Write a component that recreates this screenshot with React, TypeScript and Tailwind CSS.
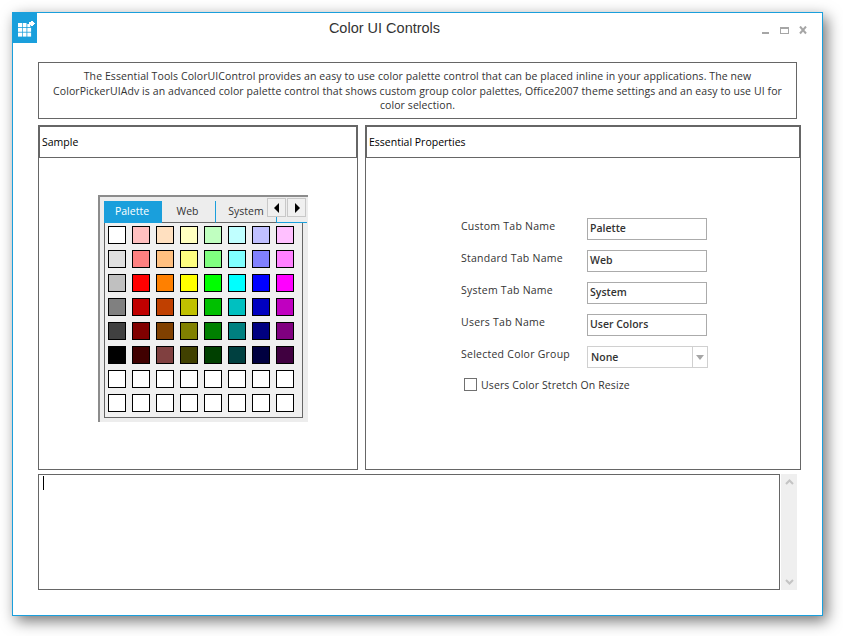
const rows = [
  ["#ffffff", "#ffc0c0", "#ffe0c0", "#ffffc0", "#c0ffc0", "#c0ffff", "#c0c0ff", "#ffc0ff"],
  ["#e0e0e0", "#ff8080", "#ffc080", "#ffff80", "#80ff80", "#80ffff", "#8080ff", "#ff80ff"],
  ["#c0c0c0", "#ff0000", "#ff8000", "#ffff00", "#00ff00", "#00ffff", "#0000ff", "#ff00ff"],
  ["#808080", "#c00000", "#c04000", "#c0c000", "#00c000", "#00c0c0", "#0000c0", "#c000c0"],
  ["#404040", "#800000", "#804000", "#808000", "#008000", "#008080", "#000080", "#800080"],
  ["#000000", "#400000", "#804040", "#404000", "#004000", "#004040", "#000040", "#400040"],
  ["#ffffff", "#ffffff", "#ffffff", "#ffffff", "#ffffff", "#ffffff", "#ffffff", "#ffffff"],
  ["#ffffff", "#ffffff", "#ffffff", "#ffffff", "#ffffff", "#ffffff", "#ffffff", "#ffffff"],
];

const fields = [
  ["Custom Tab Name", "Palette"],
  ["Standard Tab Name", "Web"],
  ["System Tab Name", "System"],
  ["Users Tab Name", "User Colors"],
];

function AppIcon() {
  return (
    <svg width="24" height="30" viewBox="0 0 24 30" className="block">
      <rect width="24" height="30" fill="#1a9fdc" />
      <g fill="#ffffff">
        <rect x="5" y="10" width="4" height="4" />
        <rect x="9.7" y="10" width="3.8" height="4" />
        <rect x="14.3" y="11" width="3" height="3" />
        <rect x="5" y="14.8" width="4" height="4" />
        <rect x="9.7" y="14.8" width="3.8" height="4" />
        <rect x="14.3" y="14.8" width="3.8" height="4" />
        <rect x="5" y="19.6" width="4" height="4" />
        <rect x="9.7" y="19.6" width="3.8" height="4" />
        <rect x="14.3" y="19.6" width="3.8" height="4" />
        <path d="M15 11 h1 v-2 h2 v-1 h2 v1 h1 v1 h1 v1 h-1 v1 h-1 v1 h-2 v-1 h-2 v-1 z" />
      </g>
    </svg>
  );
}

function WindowButtons() {
  return (
    <div className="flex items-start gap-[10px] mt-[13px] mr-[15px] h-[10px]">
      <svg width="8" height="9" viewBox="0 0 8 9"><rect x="0" y="6" width="7" height="2" fill="#a6a6a6" /></svg>
      <svg width="9" height="9" viewBox="0 0 9 9"><rect x="0.5" y="1.5" width="8" height="6" fill="none" stroke="#a6a6a6" /><rect x="0" y="1" width="9" height="2" fill="#a6a6a6" /></svg>
      <svg width="8" height="9" viewBox="0 0 8 9"><path d="M1 0.5 L7 7.5 M7 0.5 L1 7.5" stroke="#a6a6a6" strokeWidth="2" /></svg>
    </div>
  );
}

function ColorPicker() {
  return (
    <div className="w-[210px] h-[227px] ml-[59px] mt-[38px] border-l-2 border-t-2 border-[#8c8c8c] bg-[#ededed] pt-1 pl-[4px] pr-[5px] pb-[5px]">
      <div className="relative flex h-[22px] w-[203px]">
        <div className="w-[58px] bg-[#1a9fdc] text-white flex items-center justify-center border-b border-[#1a9fdc] pr-[2px] pb-[2px]">Palette</div>
        <div className="w-[54px] flex items-center justify-center border-r border-r-[#1a9fdc] border-b border-b-[#666666] pr-[2px] pb-[2px]">Web</div>
        <div className="w-[61px] flex items-center justify-center border-r border-r-[#1a9fdc] border-b border-b-[#666666] pb-[2px]">System</div>
        <div className="flex-1 border-b border-[#1a9fdc]" />
        <div className="absolute left-[163px] -top-[3px] flex gap-px">
          <div className="w-[19px] h-[19px] bg-[#f0f0f0] border border-[#c8c8c8] flex items-center justify-center">
            <svg width="6" height="10" viewBox="0 0 6 10"><path d="M5 0 V10 L0 5 Z" fill="#000" /></svg>
          </div>
          <div className="w-[19px] h-[19px] bg-[#f0f0f0] border border-[#c8c8c8] flex items-center justify-center">
            <svg width="6" height="10" viewBox="0 0 6 10"><path d="M1 0 V10 L6 5 Z" fill="#000" /></svg>
          </div>
        </div>
      </div>
      <div className="w-[199px] h-[195px] border border-t-0 border-[#666666] bg-[#f0f0f0] pl-[3px] pt-[3px] flex flex-col gap-[6px]">
        {rows.map((r, i) => (
          <div key={i} className="flex gap-[6px]">
            {r.map((c, j) => (
              <div key={j} className="w-[18px] h-[18px] border border-black" style={{ backgroundColor: c }} />
            ))}
          </div>
        ))}
      </div>
    </div>
  );
}

function FormRow({ label, value }: { label: string; value: string }) {
  return (
    <div className="flex h-[22px] mb-[10px]">
      <div className="w-[126px] mt-[1px] tracking-[0.25px]">{label}</div>
      <div className="w-[120px] h-[22px] border border-[#ababab] pl-[2px] pb-[2px] flex items-center font-semibold text-[10.5px] text-[#333]">{value}</div>
    </div>
  );
}

export default function App() {
  return (
    <div className="w-[843px] h-[636px] bg-white pt-3 pl-3 font-['Open_Sans','Liberation_Sans',sans-serif] text-[10.5px] leading-[14px] text-[#333333]">
      <div className="w-[811px] h-[604px] bg-white border border-[#1a9fdc] shadow-[4px_5px_14px_rgba(0,0,0,0.55)] flex flex-col">
        <div className="flex justify-between h-[49px] shrink-0">
          <AppIcon />
          <div className="flex-1 text-center text-[14.5px] leading-[20px] pt-[5px] pr-[30px] text-[#333333] font-['Liberation_Sans',sans-serif]">Color UI Controls</div>
          <WindowButtons />
        </div>
        <div className="ml-[25px] w-[759px] h-[57px] border border-[#666666] text-center pt-[6px] px-[10px] text-[10.5px] leading-[14.5px] tracking-[0.09px]">
          The Essential Tools ColorUIControl provides an easy to use color palette control that can be placed inline in your applications. The new ColorPickerUIAdv is an advanced color palette control that shows custom group color palettes, Office2007 theme settings and an easy to use UI for color selection.
        </div>
        <div className="flex ml-[25px] mt-[6px] gap-[7px] h-[345px]">
          <div className="w-[320px] border border-[#666666]">
            <div className="h-[33px] -m-px border-2 border-[#666666] border-b flex items-center pl-[2px] text-black">Sample</div>
            <ColorPicker />
          </div>
          <div className="w-[436px] border border-[#666666]">
            <div className="h-[33px] -m-px border-2 border-[#666666] border-b flex items-center pl-[2px] text-black">Essential Properties</div>
            <div className="pl-[95px] pt-[61px]">
              {fields.map(([l, v]) => (
                <FormRow key={l} label={l} value={v} />
              ))}
              <div className="flex h-[22px]">
                <div className="w-[126px] mt-[1px] tracking-[0.25px]">Selected Color Group</div>
                <div className="w-[121px] h-[22px] border border-[#d0d0d0] pl-[3px] flex items-center justify-between font-semibold text-[#333]">
                  None
                  <div className="w-[15px] h-full border-l border-[#d0d0d0] flex items-center justify-center">
                    <svg width="8" height="5" viewBox="0 0 8 5"><path d="M0 0 H8 L4 5 Z" fill="#a6a6a6" /></svg>
                  </div>
                </div>
              </div>
              <label className="flex items-center mt-[9px] ml-[3px] h-[14px]">
                <span className="w-[13px] h-[13px] border border-[#707070] bg-white" />
                <span className="ml-[4px] mt-[1px] tracking-[0.12px]">Users Color Stretch On Resize</span>
              </label>
            </div>
          </div>
        </div>
        <div className="flex ml-[25px] mt-[4px] h-[116px]">
          <div className="w-[742px] border border-[#666666] pl-1 pt-[1px]">
            <div className="w-px h-[14px] bg-black" />
          </div>
          <div className="w-[16px] ml-px bg-[#efefef] flex flex-col justify-between items-center pt-[5px] pb-[5px]">
            <svg width="9" height="6" viewBox="0 0 9 6"><path d="M1 5 L4.5 1.5 L8 5" fill="none" stroke="#c4c4c4" strokeWidth="2" /></svg>
            <svg width="9" height="6" viewBox="0 0 9 6"><path d="M1 1 L4.5 4.5 L8 1" fill="none" stroke="#c4c4c4" strokeWidth="2" /></svg>
          </div>
        </div>
      </div>
    </div>
  );
}
